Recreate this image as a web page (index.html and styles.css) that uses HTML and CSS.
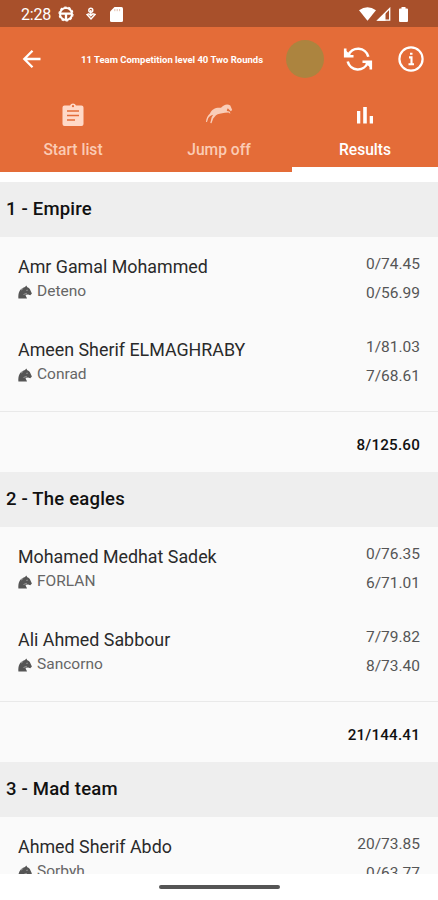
FILE: index.html
```html
<!DOCTYPE html>
<html lang="en">
<head>
  <meta charset="UTF-8">
  <meta name="viewport" content="width=device-width, initial-scale=1.0">
  <title>Team Competition Results</title>
  <link rel="stylesheet" href="styles.css">
</head>
<body>
  <!-- Shared horse head icon -->
  <svg class="defs" width="0" height="0">
    <symbol id="horse" viewBox="0 0 14 14">
      <path d="M.4 13.500C0 8 1.500 3.500 7 2L8.300.5l1 1.700c1.700.5 2.800 1.700 3.200 3.300l1.400 3-1.600 1.800-2.200-.8-2.400.2c-.3 1.500.8 1.800 1.300 3.800z"/>
      <path d="M3 5.200l2.200-1.900M8.300 5.400l1.500-.2M5.500 9.500l3.300-1.200" stroke="#ccc" stroke-width=".6"/>
    </symbol>
  </svg>

  <div class="status-bar">
    <span class="clock">2:28</span>
    <svg class="wheel" viewBox="0 0 16 16" width="16" height="16" fill="none" stroke="#fff">
      <circle cx="8" cy="8" r="6" stroke-width="2"/>
      <circle cx="8" cy="8" r="7" stroke-width="1.2" stroke-dasharray="2.5 1.9"/>
      <path d="M2.5 7.7h11M8 8v5" stroke-width="2.3"/>
    </svg>
    <svg class="touch" viewBox="0 0 10 14" width="10" height="14" fill="none" stroke="#fff" stroke-width="1.4">
      <circle cx="4.8" cy="3.2" r="2"/>
      <path d="M4.8 3v6M1 7.500l4 4.500 4-4.500-2-.7-2.200 2-2-2z"/>
    </svg>
    <svg class="card" viewBox="0 0 13 15" width="13" height="15" fill="#fff">
      <path d="M4.500 0H11.500Q13 0 13 1.500V13.500Q13 15 11.500 15H1.500Q0 15 0 13.500V4.500z"/>
      <path d="M4.800 2v2.200M7.200 2v2.200M9.600 2v2.200" stroke="#dcae98" stroke-width=".8"/>
    </svg>
    <div class="status-right">
      <svg viewBox="0 0 17 14" width="17" height="14" fill="#fff"><path d="M0 3.200Q8.500-2.800 17 3.200L8.500 13.800z"/></svg>
      <svg viewBox="0 0 15 14" width="15" height="14" fill="none" stroke="#fff"><path d="M1.800 13.200L13.700 1.500V13.200z" stroke-width="1.300"/><path d="M1 13.800L9.500 5.500V13.800z" fill="#fff" stroke="none"/></svg>
      <svg class="battery" viewBox="0 0 9 15" width="9" height="15" fill="#fff"><path d="M2.500 0h4v1.500H8Q9 1.500 9 2.500V14Q9 15 8 15H1Q0 15 0 14V2.500Q0 1.500 1 1.500h1.500z"/></svg>
    </div>
  </div>

  <header class="app-bar">
    <svg class="back" viewBox="0 0 20 20" width="20" height="20" fill="none" stroke="#fff" stroke-width="2.300"><path d="M18.500 10H2.500M10.500 1.800L2.300 10l8.200 8.200"/></svg>
    <h1>11 Team Competition level 40 Two Rounds</h1>
    <span class="dot"></span>
    <svg class="refresh" viewBox="0 0 30 26" width="30" height="26" fill="none" stroke="#fff" stroke-width="2.600">
      <path d="M25.300 10.700A10.500 10.500 0 0 0 5.300 9.500M2.200 2.500V10.200H10.500M4.700 15.500A10.500 10.500 0 0 0 24.700 16.700M27.800 23.500V15.800H19.500"/>
      <path d="M2.200 4v6.200h7zM27.800 22v-6.200h-7z" fill="#fff" stroke="none"/>
    </svg>
    <svg class="info" viewBox="0 0 26 26" width="26" height="26" fill="none" stroke="#fff" stroke-width="2.200">
      <circle cx="13" cy="13" r="11.600"/>
      <path d="M11 11.400h2.500V18M10.500 18.300h5.500M12 7.700h2.500" stroke-width="2.100"/>
    </svg>
  </header>

  <nav class="tabs">
    <a class="tab">
      <svg viewBox="0 0 22 24" width="22" height="24">
        <path fill="#ffd9c7" d="M2.500 2.500H8a3.200 3.200 0 0 1 6 0h5.500Q21.500 2.500 21.500 4.500V21Q21.500 23 19.500 23H2.500Q.5 23 .5 21V4.500Q.5 2.500 2.500 2.500z"/>
        <path d="M5 8h12M5 12.500h12M5 17h8" stroke="#e46c38" stroke-width="1.600"/>
        <circle cx="11" cy="3.200" r="1.100" fill="#e46c38"/>
      </svg>
      <span>Start list</span>
    </a>
    <a class="tab">
      <svg viewBox="0 0 28 24" width="28" height="24" fill="#f9cdb8">
        <path d="M1 19c.2-3.500 1.500-6.500 4-8.500 1.700-4.500 6-6.300 11-5.700 2.500-3.200 6.500-4.500 9.300-2.300l1.900 4.500-1.400 1.200-3-3c-.8 1.500-1.100 1.800-.8 2.900l2.500.4 1 2-1-.2-1-.8-3.500.2c-4 1-7 .5-9 2.500l-2.800 3.300-1.700 4.800-1.200-.4 1.300-5.400 1.500-2.800c-2 .5-4 1.500-4.900 3.500L2 19z"/>
      </svg>
      <span>Jump off</span>
    </a>
    <a class="tab active">
      <svg viewBox="0 0 18 24" width="18" height="24" fill="#fff"><path d="M1 8h3.300V20.500H1zM7.200 4h3.600V20.500H7.200zM13.700 13H17V20.500h-3.300z"/></svg>
      <span>Results</span>
    </a>
  </nav>

  <main class="results">
    <section class="team">
      <h2>1 - Empire</h2>
      <div class="riders">
        <div class="rider">
          <div class="who">
            <div class="name">Amr Gamal Mohammed</div>
            <div class="horse"><svg><use href="#horse"/></svg>Deteno</div>
          </div>
          <div class="scores"><div>0/74.45</div><div>0/56.99</div></div>
        </div>
        <div class="rider">
          <div class="who">
            <div class="name">Ameen Sherif ELMAGHRABY</div>
            <div class="horse"><svg><use href="#horse"/></svg>Conrad</div>
          </div>
          <div class="scores"><div>1/81.03</div><div>7/68.61</div></div>
        </div>
      </div>
      <div class="total">8/125.60</div>
    </section>

    <section class="team">
      <h2>2 - The eagles</h2>
      <div class="riders">
        <div class="rider">
          <div class="who">
            <div class="name">Mohamed Medhat Sadek</div>
            <div class="horse"><svg><use href="#horse"/></svg>FORLAN</div>
          </div>
          <div class="scores"><div>0/76.35</div><div>6/71.01</div></div>
        </div>
        <div class="rider">
          <div class="who">
            <div class="name">Ali Ahmed Sabbour</div>
            <div class="horse"><svg><use href="#horse"/></svg>Sancorno</div>
          </div>
          <div class="scores"><div>7/79.82</div><div>8/73.40</div></div>
        </div>
      </div>
      <div class="total">21/144.41</div>
    </section>

    <section class="team">
      <h2>3 - Mad team</h2>
      <div class="riders">
        <div class="rider">
          <div class="who">
            <div class="name">Ahmed Sherif Abdo</div>
            <div class="horse"><svg><use href="#horse"/></svg>Sorbyh</div>
          </div>
          <div class="scores"><div>20/73.85</div><div>0/63.77</div></div>
        </div>
      </div>
    </section>
  </main>

  <footer class="nav-bar"><span class="handle"></span></footer>
</body>
</html>
```

FILE: styles.css
```css
* {
  box-sizing: border-box;
}

body {
  display: flex;
  flex-direction: column;
  height: 100vh;
  margin: 0;
  overflow: hidden;
  background: #fff;
  color: #2a2a2a;
  font-family: Roboto, sans-serif;
}

svg {
  display: block;
  flex: none;
}

.defs {
  position: absolute;
}

/* Status bar */
.status-bar {
  display: flex;
  flex: none;
  align-items: center;
  height: 27px;
  padding: 1px 30px 0 21px;
  background: #a8502b;
  color: #fff;
}

.clock {
  width: 37px;
  font-size: 16px;
  letter-spacing: -0.2px;
}

.touch {
  margin-left: 12px;
}

.card {
  margin-left: 14px;
}

.status-right {
  display: flex;
  align-items: center;
  margin-left: auto;
}

.battery {
  margin-left: 8px;
}

/* App bar */
.app-bar {
  display: flex;
  flex: none;
  align-items: center;
  height: 64px;
  padding: 0 14px 0 22px;
  background: #e46c38;
  color: #fff;
}

.app-bar h1 {
  width: 205px;
  margin: 0 0 0 39px;
  font-size: 9.5px;
  font-weight: 700;
  white-space: nowrap;
}

.dot {
  width: 38px;
  height: 38px;
  border-radius: 50%;
  background: #ac843f;
}

.refresh {
  margin-left: 19px;
}

.info {
  margin-left: auto;
}

/* Tabs */
.tabs {
  display: flex;
  flex: none;
  height: 81px;
  background: #e46c38;
}

.tab {
  display: flex;
  flex: 1;
  flex-direction: column;
  align-items: center;
  gap: 13px;
  padding-top: 12px;
  color: #fbcbb4;
  font-size: 15.6px;
  font-weight: 500;
  line-height: 20px;
}

.tab.active {
  border-bottom: 5px solid #fff;
  color: #fff;
}

/* Results list */
.results {
  flex: 1;
  min-height: 0;
  padding-top: 10px;
  overflow: hidden;
  background: linear-gradient(#fff 10px, #fafafa 10px);
}

.team h2 {
  height: 55px;
  margin: 0;
  padding-left: 6px;
  background: #eee;
  color: #111;
  font-size: 18.5px;
  font-weight: 500;
  line-height: 54px;
  letter-spacing: 0.2px;
}

.riders {
  height: 175px;
  border-bottom: 1px solid #e9e9e9;
}

.rider {
  display: flex;
  justify-content: space-between;
  height: 83px;
  padding: 18px 18px 0;
}

.name {
  font-size: 17.85px;
  line-height: 24px;
}

.horse {
  display: flex;
  align-items: center;
  gap: 5px;
  color: #666;
  font-size: 15.5px;
  line-height: 25px;
}

.horse svg {
  width: 14px;
  height: 14px;
  fill: #555;
}

.scores {
  margin-top: -5px;
  color: #555;
  font-size: 15.5px;
  line-height: 28.5px;
  text-align: right;
}

.total {
  height: 60px;
  padding-right: 18px;
  color: #111;
  font-size: 15.2px;
  font-weight: 500;
  line-height: 67px;
  letter-spacing: 0.2px;
  text-align: right;
}

/* System navigation */
.nav-bar {
  display: flex;
  flex: none;
  justify-content: center;
  height: 26px;
  padding-top: 11px;
}

.handle {
  width: 121px;
  height: 4px;
  border-radius: 2px;
  background: #555;
}
```
